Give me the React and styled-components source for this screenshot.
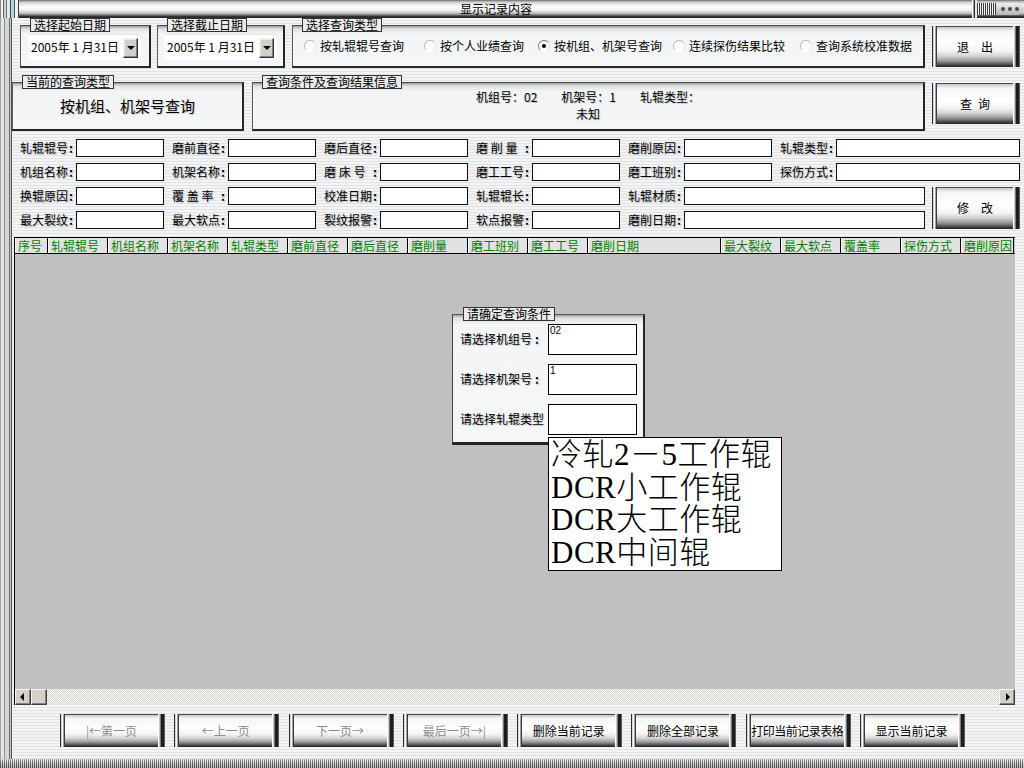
import React from "react";
import styled, { createGlobalStyle } from "styled-components";

const GlobalStyle = createGlobalStyle`
  html, body { margin: 0; padding: 0; }
  body {
    font-family: "Noto Sans CJK SC", "Liberation Sans", sans-serif;
    font-size: 12px;
    color: #000;
  }
  *, *::before, *::after { box-sizing: border-box; }
`;

const STRIPES =
  "repeating-linear-gradient(to bottom, #f3f4f6 0px, #f3f4f6 2px, #e0e2e5 2px, #e0e2e5 3px)";

const Window = styled.div`
  width: 1024px;
  height: 768px;
  overflow: hidden;
  display: flex;
  flex-direction: column;
  background: ${STRIPES};
  line-height: 1.2;
`;

/* ---------- title bar ---------- */
const TitleBar = styled.div`
  flex: 0 0 17px;
  display: flex;
  background: linear-gradient(
    to bottom,
    #5e5e5e 0px,
    #a8a8a8 1px,
    #dcdcdc 3px,
    #ffffff 7px,
    #f2f2f2 10px,
    #c6c6c6 13px,
    #7c7c7c 15px,
    #3c3c3c 16px,
    #2a2a2a 17px
  );
`;
const TitleLeftDeco = styled.div`
  width: 20px;
  flex-shrink: 0;
  background: linear-gradient(
    to right,
    #8a8a8a 0 1px,
    #f4f4f4 1px 3px,
    #606060 3px 4px,
    #d0d0d0 4px 6px,
    #707070 6px 7px,
    #e8e8e8 7px 10px,
    #404040 10px 11px,
    #a6dede 11px 14px,
    #505050 14px 15px,
    #f0f0f0 15px 18px,
    #404040 18px 19px,
    transparent 19px
  );
`;
const TitleText = styled.div`
  flex: 1;
  display: flex;
  align-items: center;
  justify-content: center;
  font-size: 12px;
  line-height: 17px;
  padding-bottom: 1px;
`;
const TitleRightDeco = styled.div`
  width: 52px;
  flex-shrink: 0;
  display: flex;
  align-items: center;
`;
const DecoSep = styled.div`
  width: 5px;
  align-self: stretch;
  background: linear-gradient(to right, #ffffff 0 1px, #9a9a9a 1px 2px, #2a2a2a 2px 3px, #e8e8e8 3px 5px);
`;
const DecoLines = styled.div`
  width: 19px;
  height: 12px;
  background: repeating-linear-gradient(to right, #3a3a3a 0 1px, #f4f4f4 1px 2px);
`;
const DecoDots = styled.div`
  flex: 1;
  height: 12px;
  display: flex;
  align-items: center;
  justify-content: space-around;
  padding: 0 3px;
  border-radius: 0 6px 6px 0;
  background: linear-gradient(to bottom, #f0f0f0, #b4b4b4);
`;
const Dot = styled.span`
  width: 4px;
  height: 4px;
  border-radius: 50%;
  background: #4a4a4a;
`;

/* ---------- body ---------- */
const Body = styled.div`
  flex: 1;
  display: flex;
  min-height: 0;
`;
const Rail = styled.div`
  width: 12px;
  flex-shrink: 0;
  background: linear-gradient(
    to right,
    #a0a0a0 0 1px,
    #e6e6e6 1px 4px,
    #8c8c8c 4px 5px,
    #d6d6d6 5px 9px,
    #6c6c6c 9px 10px,
    #cacaca 10px 11px,
    #505050 11px 12px
  );
`;
const Main = styled.div`
  flex: 1;
  min-width: 0;
  display: flex;
  flex-direction: column;
`;

const Row = styled.div`
  display: flex;
  align-items: flex-start;
  padding-left: ${(p) => p.$pl || 0}px;
  margin-top: ${(p) => p.$mt || 0}px;
`;

/* ---------- group box ---------- */
const Group = styled.div`
  display: flex;
  flex-direction: column;
  width: ${(p) => p.$w}px;
  margin-left: ${(p) => p.$ml || 0}px;
  flex-shrink: 0;
`;
const Legend = styled.div`
  align-self: flex-start;
  margin-left: ${(p) => p.$ml || 10}px;
  position: relative;
  z-index: 1;
  height: 14px;
  padding: 0 3px;
  line-height: 12px;
  font-size: 12px;
  border: 1px solid #333;
  background: #ebebeb;
  white-space: nowrap;
`;
const Frame = styled.div`
  margin-top: -7px;
  height: ${(p) => p.$h}px;
  border-top: 1px solid #4a4a4a;
  border-left: 1px solid #5a5a5a;
  border-right: 2px solid #262626;
  border-bottom: 2px solid #262626;
  background: linear-gradient(to bottom, #9c9c9c 0px, #dfe1e3 3px, #f2f4f6 8px, #f4f6f8 100%);
  display: flex;
  align-items: ${(p) => p.$align || "center"};
  justify-content: ${(p) => p.$justify || "flex-start"};
  padding: ${(p) => p.$pad || "0"};
`;

/* ---------- date picker ---------- */
const DateField = styled.div`
  width: 112px;
  height: 26px;
  margin-left: ${(p) => p.$ml}px;
  background: #fff;
  border-top: 1px solid #e2e4e6;
  display: flex;
  align-items: center;
  padding-left: 3px;
  font-size: 12px;
  white-space: pre;
`;
const DropBtn = styled.span`
  margin-left: auto;
  margin-right: 2px;
  width: 15px;
  height: 20px;
  background: #d4d0c8;
  border: 1px solid;
  border-color: #f4f4f4 #303030 #303030 #f4f4f4;
  box-shadow: inset -1px -1px #808080, inset 1px 1px #e8e8e8;
  display: flex;
  align-items: center;
  justify-content: center;
  &::after {
    content: "";
    border-left: 4px solid transparent;
    border-right: 4px solid transparent;
    border-top: 4px solid #000;
  }
`;

/* ---------- radios ---------- */
const RadioItem = styled.label`
  display: flex;
  align-items: center;
  width: ${(p) => (p.$w ? `${p.$w}px` : "auto")};
  flex-shrink: 0;
  font-size: 12px;
  white-space: nowrap;
`;
const RadioDot = styled.span`
  width: 12px;
  height: 12px;
  margin-right: 4px;
  border-radius: 50%;
  border: 1px solid;
  border-color: ${(p) => (p.$on ? "#707070 #d8d8d8 #ffffff #808080" : "#b4b4b4 #e4e4e4 #ffffff #c0c0c0")};
  background: #fff;
  display: inline-flex;
  align-items: center;
  justify-content: center;
  flex-shrink: 0;
  &::after {
    content: "";
    width: 4px;
    height: 4px;
    border-radius: 50%;
    background: ${(p) => (p.$on ? "#000" : "transparent")};
  }
`;

/* ---------- metal buttons ---------- */
const MetalBtn = styled.button`
  display: flex;
  align-items: stretch;
  width: ${(p) => p.$w}px;
  height: ${(p) => p.$h}px;
  margin: ${(p) => p.$m || "0"};
  padding: 0;
  border: 0;
  background: transparent;
  font-family: inherit;
  flex-shrink: 0;
  cursor: default;
`;
const CapLeft = styled.span`
  flex: 0 0 5px;
  background: linear-gradient(
    to right,
    #2a2a2a 0 1px,
    #d8d8d8 1px 2px,
    #f8f8f8 2px 3px,
    #a0a0a0 3px 4px,
    #3a3a3a 4px 5px
  );
`;
const CapRight = styled.span`
  flex: 0 0 7px;
  background: linear-gradient(
    to right,
    #ffffff 0 1px,
    #c8c8c8 1px 2px,
    #7a7a7a 2px 3px,
    #1e1e1e 3px 6px,
    #5a5a5a 6px 7px
  );
`;
const Face = styled.span`
  flex: 1;
  min-width: 0;
  display: flex;
  align-items: center;
  justify-content: center;
  border-top: 1px solid #4a4a4a;
  background: linear-gradient(
    to bottom,
    #c4c4c4 0%,
    #f4f4f4 10%,
    #ffffff 40%,
    #f4f4f4 60%,
    #d2d2d2 73%,
    #969696 85%,
    #454545 95%,
    #202020 100%
  );
  color: ${(p) => (p.$disabled ? "#8c8c8c" : "#000")};
  font-size: 12px;
  letter-spacing: ${(p) => p.$ls || 0}px;
  white-space: pre;
  padding-bottom: 2px;
`;

function Button({ w, h, m, disabled, ls, children }) {
  return (
    <MetalBtn $w={w} $h={h} $m={m} type="button">
      <CapLeft />
      <Face $disabled={disabled} $ls={ls}>
        {children}
      </Face>
      <CapRight />
    </MetalBtn>
  );
}

/* ---------- info panels ---------- */
const BigType = styled.div`
  font-size: 15px;
  text-shadow: 1px 1px 1px rgba(0, 0, 0, 0.18);
  padding-bottom: 1px;
`;
const InfoText = styled.div`
  text-align: center;
  font-size: 12px;
  line-height: 17px;
  white-space: pre;
  text-shadow: 1px 1px 1px rgba(0, 0, 0, 0.2);
  padding-bottom: 2px;
`;

/* ---------- form ---------- */
const Form = styled.div`
  margin-top: 8px;
  padding-left: 8px;
  display: flex;
  flex-direction: column;
  gap: 6px;
`;
const FormRow = styled.div`
  display: flex;
  gap: 8px;
  height: 18px;
`;
const LowerBlock = styled.div`
  display: flex;
  align-items: center;
`;
const LowerRows = styled.div`
  display: flex;
  flex-direction: column;
  gap: 6px;
`;
const Field = styled.div`
  display: flex;
  height: 18px;
`;
const Label = styled.span`
  width: ${(p) => p.$w || 56}px;
  flex-shrink: 0;
  display: flex;
  align-items: center;
  font-size: 12px;
  white-space: pre;
  text-shadow: 1px 1px 1px rgba(0, 0, 0, 0.22);
`;
const Colon = styled.span`
  margin-left: ${(p) => (p.$tight ? "3px" : "auto")};
  margin-right: 3px;
  font-weight: bold;
`;
const TextBox = styled.div`
  width: ${(p) => p.$w}px;
  height: 18px;
  background: #fff;
  border: 1px solid #111;
  flex-shrink: 0;
`;

function FormField({ label, w = 88 }) {
  return (
    <Field>
      <Label>
        {label}
        <Colon>:</Colon>
      </Label>
      <TextBox $w={w} />
    </Field>
  );
}

/* ---------- grid ---------- */
const GridWrap = styled.div`
  margin: 8px 0 0 2px;
  width: 1001px;
  height: 468px;
  display: flex;
  flex-direction: column;
  border-left: 1px solid #000;
  flex-shrink: 0;
`;
const HeaderRow = styled.div`
  display: flex;
  height: 17px;
  flex-shrink: 0;
  border-top: 1px solid #000;
  border-bottom: 1px solid #000;
  background: #c0c0c0;
`;
const HeaderCell = styled.div`
  width: ${(p) => p.$w}px;
  flex-shrink: 0;
  height: 100%;
  background: #e2e2e2;
  border-left: 1px solid #fff;
  border-right: 1px solid #000;
  color: #008000;
  font-size: 12px;
  line-height: 15px;
  padding-left: 2px;
  white-space: nowrap;
`;
const GridBody = styled.div`
  flex: 1;
  position: relative;
  background: #c0c0c0;
`;
const HScroll = styled.div`
  display: flex;
  height: 16px;
  flex-shrink: 0;
`;
const ScrollBtn = styled.div`
  width: 16px;
  height: 16px;
  flex-shrink: 0;
  background: #d4d0c8;
  border: 1px solid;
  border-color: #f4f4f4 #404040 #404040 #f4f4f4;
  box-shadow: inset -1px -1px #808080;
  display: flex;
  align-items: center;
  justify-content: center;
`;
const ArrowL = styled.span`
  border-top: 4px solid transparent;
  border-bottom: 4px solid transparent;
  border-right: 4px solid #000;
  margin-right: 2px;
`;
const ArrowR = styled.span`
  border-top: 4px solid transparent;
  border-bottom: 4px solid transparent;
  border-left: 4px solid #000;
  margin-left: 2px;
`;
const ScrollTrack = styled.div`
  flex: 1;
  background: repeating-conic-gradient(#ffffff 0 25%, #d4d0c8 0 50%) 0 0 / 2px 2px;
`;

/* ---------- dialog ---------- */
const Dialog = styled.div`
  position: absolute;
  left: 437px;
  top: 53px;
  width: 193px;
  display: flex;
  flex-direction: column;
`;
const DialogFrame = styled.div`
  margin-top: -7px;
  height: 131px;
  border-top: 1px solid #555;
  border-left: 1px solid #444;
  border-right: 2px solid #262626;
  border-bottom: 3px solid #262626;
  background: linear-gradient(to bottom, #a0a0a0 0px, #dcdee0 3px, #f3f5f7 9px, #f4f6f8 100%);
  padding: 9px 0 0 7px;
  display: flex;
  flex-direction: column;
  gap: 9px;
`;
const DlgRow = styled.div`
  display: flex;
  align-items: center;
  height: 31px;
`;
const DlgInput = styled.div`
  width: 89px;
  height: 31px;
  background: #fff;
  border: 1px solid #000;
  font-size: 10px;
  line-height: 12px;
  padding: 0 1px;
  font-family: "Liberation Sans", sans-serif;
`;

const DropList = styled.div`
  position: absolute;
  left: 533px;
  top: 183px;
  width: 234px;
  height: 134px;
  background: #fff;
  border: 1px solid #000;
  padding: 1px 0 0 2px;
  font-family: "Liberation Serif", "Noto Sans CJK SC", serif;
  font-weight: 300;
  font-size: 31px;
  line-height: 32.6px;
  white-space: nowrap;
  overflow: hidden;
`;
const DropItem = styled.div`
  letter-spacing: 0.5px;
`;

/* ---------- bottom ---------- */
const BottomButtons = styled.div`
  display: flex;
  gap: 9.3px;
  margin-top: 9px;
  padding-left: 48px;
`;
const BottomBar = styled.div`
  flex: 0 0 9px;
  background: linear-gradient(
      to bottom,
      rgba(255, 255, 255, 0.45) 0px,
      rgba(255, 255, 255, 0) 4px,
      rgba(0, 0, 0, 0.18) 9px
    ),
    repeating-linear-gradient(to right, #5c5c5c 0 1px, #e2e2e2 1px 2px);
`;

const headerCols = [
  ["序号", 33],
  ["轧辊辊号", 60],
  ["机组名称", 60],
  ["机架名称", 60],
  ["轧辊类型", 60],
  ["磨前直径", 60],
  ["磨后直径", 60],
  ["磨削量", 60],
  ["磨工班别", 60],
  ["磨工工号", 60],
  ["磨削日期", 133],
  ["最大裂纹", 60],
  ["最大软点", 60],
  ["覆盖率", 60],
  ["探伤方式", 60],
  ["磨削原因", 53],
];

const radios = [
  ["按轧辊辊号查询", 120, false],
  ["按个人业绩查询", 114, false],
  ["按机组、机架号查询", 135, true],
  ["连续探伤结果比较", 127, false],
  ["查询系统校准数据", 0, false],
];

const bottomBtns = [
  ["|←第一页", true, 0],
  ["←上一页", true, 0],
  ["下一页→", true, 0],
  ["最后一页→|", true, 0],
  ["删除当前记录", false, 0],
  ["删除全部记录", false, 0],
  ["打印当前记录表格", false, -0.5],
  ["显示当前记录", false, 0],
];

export default function App() {
  return (
    <>
      <GlobalStyle />
      <Window>
        <TitleBar>
          <TitleLeftDeco />
          <TitleText>显示记录内容</TitleText>
          <TitleRightDeco>
            <DecoSep />
            <DecoLines />
            <DecoDots>
              <Dot />
              <Dot />
              <Dot />
            </DecoDots>
          </TitleRightDeco>
        </TitleBar>

        <Body>
          <Rail />
          <Main>
            <Row $pl={8}>
              <Group $w={131}>
                <Legend>选择起始日期</Legend>
                <Frame $h={43} $align="flex-start" $pad="8px 0 0 0">
                  <DateField $ml={7}>
                    2005年 1 月31日
                    <DropBtn />
                  </DateField>
                </Frame>
              </Group>
              <Group $w={128} $ml={6}>
                <Legend>选择截止日期</Legend>
                <Frame $h={43} $align="flex-start" $pad="8px 0 0 0">
                  <DateField $ml={6}>
                    2005年 1 月31日
                    <DropBtn />
                  </DateField>
                </Frame>
              </Group>
              <Group $w={633} $ml={7}>
                <Legend>选择查询类型</Legend>
                <Frame $h={43} $pad="0 0 0 11px">
                  {radios.map(([t, w, on]) => (
                    <RadioItem key={t} $w={w}>
                      <RadioDot $on={on} />
                      {t}
                    </RadioItem>
                  ))}
                </Frame>
              </Group>
              <Button w={88} h={41} m="8px 0 0 7px">
                退{"\u2002\u2002"}出
              </Button>
            </Row>

            <Row $mt={7}>
              <Group $w={232}>
                <Legend>当前的查询类型</Legend>
                <Frame $h={49} $justify="center">
                  <BigType>按机组、机架号查询</BigType>
                </Frame>
              </Group>
              <Group $w={673} $ml={8}>
                <Legend>查询条件及查询结果信息</Legend>
                <Frame $h={49} $justify="center">
                  <InfoText>
                    {"机组号：02\u2002\u2002\u2002\u2002机架号：1\u2002\u2002\u2002\u2002轧辊类型：\n未知"}
                  </InfoText>
                </Frame>
              </Group>
              <Button w={88} h={41} m="8px 0 0 7px">
                查{"\u2002"}询
              </Button>
            </Row>

            <Form>
              <FormRow>
                <FormField label="轧辊辊号" />
                <FormField label="磨前直径" />
                <FormField label="磨后直径" />
                <FormField label="磨 削 量" />
                <FormField label="磨削原因" />
                <FormField label="轧辊类型" w={184} />
              </FormRow>
              <FormRow>
                <FormField label="机组名称" />
                <FormField label="机架名称" />
                <FormField label="磨 床 号" />
                <FormField label="磨工工号" />
                <FormField label="磨工班别" />
                <FormField label="探伤方式" w={184} />
              </FormRow>
              <LowerBlock>
                <LowerRows>
                  <FormRow>
                    <FormField label="换辊原因" />
                    <FormField label="覆 盖 率" />
                    <FormField label="校准日期" />
                    <FormField label="轧辊辊长" />
                    <FormField label="轧辊材质" w={241} />
                  </FormRow>
                  <FormRow>
                    <FormField label="最大裂纹" />
                    <FormField label="最大软点" />
                    <FormField label="裂纹报警" />
                    <FormField label="软点报警" />
                    <FormField label="磨削日期" w={241} />
                  </FormRow>
                </LowerRows>
                <Button w={88} h={42} m="0 0 0 7px">
                  修{"\u2002\u2002"}改
                </Button>
              </LowerBlock>
            </Form>

            <GridWrap>
              <HeaderRow>
                {headerCols.map(([t, w]) => (
                  <HeaderCell key={t} $w={w}>
                    {t}
                  </HeaderCell>
                ))}
              </HeaderRow>
              <GridBody>
                <Dialog>
                  <Legend $ml={11}>请确定查询条件</Legend>
                  <DialogFrame>
                    <DlgRow>
                      <Label $w={88}>
                        请选择机组号
                        <Colon $tight>:</Colon>
                      </Label>
                      <DlgInput>02</DlgInput>
                    </DlgRow>
                    <DlgRow>
                      <Label $w={88}>
                        请选择机架号
                        <Colon $tight>:</Colon>
                      </Label>
                      <DlgInput>1</DlgInput>
                    </DlgRow>
                    <DlgRow>
                      <Label $w={88}>请选择轧辊类型</Label>
                      <DlgInput />
                    </DlgRow>
                  </DialogFrame>
                </Dialog>
                <DropList>
                  <DropItem>冷轧2－5工作辊</DropItem>
                  <DropItem>DCR小工作辊</DropItem>
                  <DropItem>DCR大工作辊</DropItem>
                  <DropItem>DCR中间辊</DropItem>
                </DropList>
              </GridBody>
              <HScroll>
                <ScrollBtn>
                  <ArrowL />
                </ScrollBtn>
                <ScrollBtn />
                <ScrollTrack />
                <ScrollBtn>
                  <ArrowR />
                </ScrollBtn>
              </HScroll>
            </GridWrap>

            <BottomButtons>
              {bottomBtns.map(([t, dis, ls]) => (
                <Button key={t} w={105} h={33} disabled={dis} ls={ls}>
                  {t}
                </Button>
              ))}
            </BottomButtons>
          </Main>
        </Body>
        <BottomBar />
      </Window>
    </>
  );
}
